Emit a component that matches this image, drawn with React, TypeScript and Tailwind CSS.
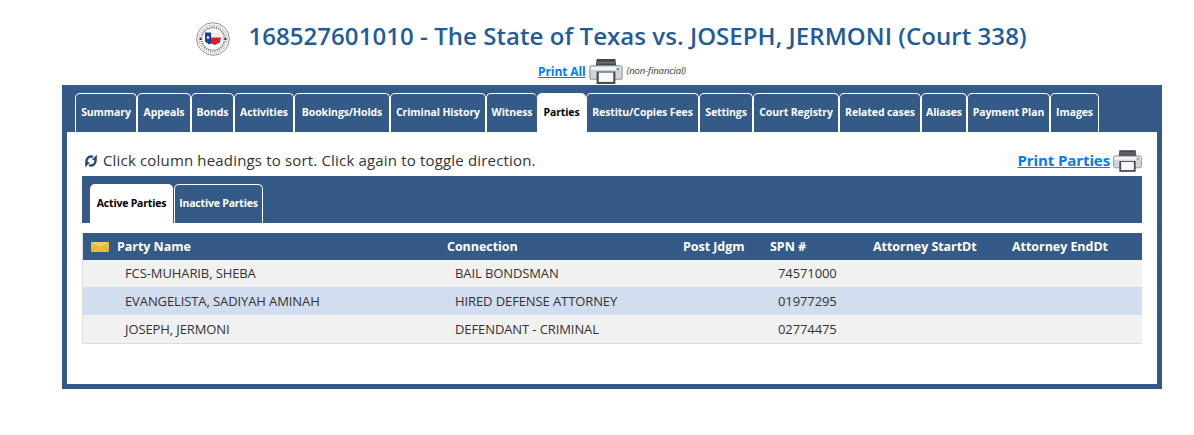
const tabs = [
  { label: "Summary", width: "w-[62px]" },
  { label: "Appeals", width: "w-[54px]" },
  { label: "Bonds", width: "w-[43px]" },
  { label: "Activities", width: "w-[60px]" },
  { label: "Bookings/Holds", width: "w-[96px]" },
  { label: "Criminal History", width: "w-[96px]" },
  { label: "Witness", width: "w-[51px] border-r-0" },
  { label: "Parties", width: "w-[49px]", active: true },
  { label: "Restitu/Copies Fees", width: "w-[113px]" },
  { label: "Settings", width: "w-[54px]" },
  { label: "Court Registry", width: "w-[86px]" },
  { label: "Related cases", width: "w-[82px]" },
  { label: "Aliases", width: "w-[46px]" },
  { label: "Payment Plan", width: "w-[83px]" },
  { label: "Images", width: "w-[49px]" },
];

const rows = [
  { name: "FCS-MUHARIB, SHEBA", connection: "BAIL BONDSMAN", spn: "74571000", bg: "bg-[#f1f1f1]", height: "h-[27px]" },
  { name: "EVANGELISTA, SADIYAH AMINAH", connection: "HIRED DEFENSE ATTORNEY", spn: "01977295", bg: "bg-[#d2deef]", height: "h-[28px]" },
  { name: "JOSEPH, JERMONI", connection: "DEFENDANT - CRIMINAL", spn: "02774475", bg: "bg-[#f1f1f1]", height: "h-[28px]" },
];

const Printer = ({ className }: { className: string }) => (
  <svg viewBox="0 0 32 24" className={className}>
    <path d="M7 0h18l1 8H6z" fill="#45454b" />
    <rect x="7" y="2.500" width="18" height="2" fill="#6b6b72" />
    <rect x="0.500" y="6.500" width="31" height="13" rx="2" fill="#cfd5d9" stroke="#8f959a" />
    <rect x="1.500" y="7.500" width="29" height="3" fill="#f2f4f5" />
    <rect x="26" y="8.500" width="3" height="2" fill="#4aa3d8" />
    <rect x="7" y="12" width="18" height="12" fill="#4a4a50" />
    <rect x="9" y="13" width="14" height="9" fill="#f7f7f7" />
  </svg>
);

const Seal = () => (
  <svg viewBox="0 0 34 34" className="w-[34px] h-[34px] mt-[4px]">
    <circle cx="17" cy="17" r="16.3" fill="#fff" stroke="#8c8c8c" strokeWidth="1" />
    <circle cx="17" cy="17" r="14.2" fill="none" stroke="#b5b5b5" strokeWidth="0.8" />
    <circle cx="17" cy="17" r="11.6" fill="none" stroke="#7f7f7f" strokeWidth="2.4" strokeDasharray="1.2 1" />
    <circle cx="17" cy="17" r="9.6" fill="#fff" />
    <path d="M9 10.500h6v11l-2 1-4-3z" fill="#1f3f99" />
    <path d="M15 10.500h9v5h-9z" fill="#efefef" />
    <path d="M15 15.500h10l-1 5-5 2.500-4-1.500z" fill="#d2232a" />
    <circle cx="12" cy="15.500" r="1.200" fill="#fff" />
    <circle cx="4.500" cy="17" r="1.100" fill="#222" />
    <circle cx="29.500" cy="17" r="1.100" fill="#222" />
  </svg>
);

const SortIcon = () => (
  <svg viewBox="0 0 12 14" className="w-[12px] h-[14px] text-[#2a4a78]" fill="none">
    <path d="M8 3A4.500 4.500 0 0 0 2.500 9.800" stroke="currentColor" strokeWidth="2.400" />
    <path d="M4 11A4.500 4.500 0 0 0 9.500 4.200" stroke="currentColor" strokeWidth="2.400" />
    <path d="M11.800 .800v5H6.800z" fill="currentColor" />
    <path d="M.200 13.200v-5h5z" fill="currentColor" />
  </svg>
);

const Envelope = () => (
  <svg viewBox="0 0 18 10" className="w-[18px] h-[10px]">
    <rect width="18" height="10" fill="#e8bb3f" />
    <path d="M0 0l9 5 9-5" fill="#f0cf63" />
    <path d="M0 10l6-6M18 10l-6-6" stroke="#d9a52f" strokeWidth="0.700" fill="none" />
  </svg>
);

export default function App() {
  return (
    <div className="h-[435px] bg-white font-['Open_Sans','Noto_Sans',sans-serif] overflow-hidden">
      {/* Title */}
      <div className="h-[58px] pt-[18px] flex justify-center items-start pl-[29px]">
        <div className="flex items-start gap-[18px]">
          <Seal />
          <h1 className="text-[24px] leading-[36px] font-semibold text-[#1f5c99] tracking-[0.06px] whitespace-nowrap">
            168527601010 - The State of Texas vs. JOSEPH, JERMONI (Court 338)
          </h1>
        </div>
      </div>
      <div className="h-[27px] flex justify-center items-center gap-[3px] pl-[30px]">
        <a href="#" className="text-[12px] font-bold text-[#007bff] underline tracking-[-0.1px]">Print All</a>
        <Printer className="w-[34px] h-[25px]" />
        <span className="ml-[1px] text-[9.5px] italic text-[#333] tracking-[-0.1px]">(non-financial)</span>
      </div>

      {/* Main panel */}
      <div className="mx-[62px] w-[1100px] h-[304px] bg-[#345a87] p-[5px] pt-0">
        <div className="h-[47px] pl-[8px] pt-[8px] flex items-end">
          {tabs.map((tab) => (
            <div
              key={tab.label}
              className={`${tab.active ? "bg-white text-black" : "bg-[#345a87] text-white border border-b-0 border-white"} ${tab.width} h-[39px] rounded-t-[5px] shrink-0 flex items-center justify-center text-[10.5px] font-bold tracking-[-0.1px] whitespace-nowrap`}
            >
              {tab.label}
            </div>
          ))}
        </div>

        <div className="h-[252px] bg-white px-[15px]">
          <div className="h-[44px] flex items-center justify-between pt-[13px]">
            <div className="flex items-center gap-[6px] pl-[3px] text-[15px] text-[#333] tracking-[0.17px]">
              <SortIcon />
              Click column headings to sort. Click again to toggle direction.
            </div>
            <div className="flex items-center gap-[3px]">
              <a href="#" className="text-[15px] font-bold text-[#007bff] underline tracking-[-0.1px]">Print Parties</a>
              <Printer className="w-[29px] h-[22px]" />
            </div>
          </div>

          <div className="h-[47px] bg-[#345a87] pl-[8px] pt-[8px] flex">
            <div className="w-[83px] h-[39px] bg-white text-black rounded-t-[5px] flex items-center justify-center text-[10.5px] font-bold tracking-[-0.2px]">
              Active Parties
            </div>
            <div className="ml-[1px] w-[89px] h-[39px] border border-b-0 border-white text-white rounded-t-[5px] flex items-center justify-center text-[10.5px] font-bold tracking-[-0.2px]">
              Inactive Parties
            </div>
          </div>

          <div className="mt-[10px] border-l border-b border-[#dcdcdc]">
            <div className="h-[27px] pt-[1px] bg-[#345a87] text-white text-[12.5px] font-bold grid grid-cols-[364px_236px_87px_103px_139px_1fr] items-center tracking-[-0.05px]">
              <div className="flex items-center gap-[8px] pl-[8px]">
                <Envelope />
                Party Name
              </div>
              <div>Connection</div>
              <div>Post Jdgm</div>
              <div>SPN #</div>
              <div>Attorney StartDt</div>
              <div>Attorney EndDt</div>
            </div>
            {rows.map((row) => (
              <div
                key={row.name}
                className={`${row.bg} ${row.height} pt-[1px] text-[13px] text-[#333] grid grid-cols-[372px_323px_1fr] items-center tracking-[-0.1px]`}
              >
                <div className="pl-[42px]">{row.name}</div>
                <div>{row.connection}</div>
                <div>{row.spn}</div>
              </div>
            ))}
          </div>
        </div>
      </div>
    </div>
  );
}
